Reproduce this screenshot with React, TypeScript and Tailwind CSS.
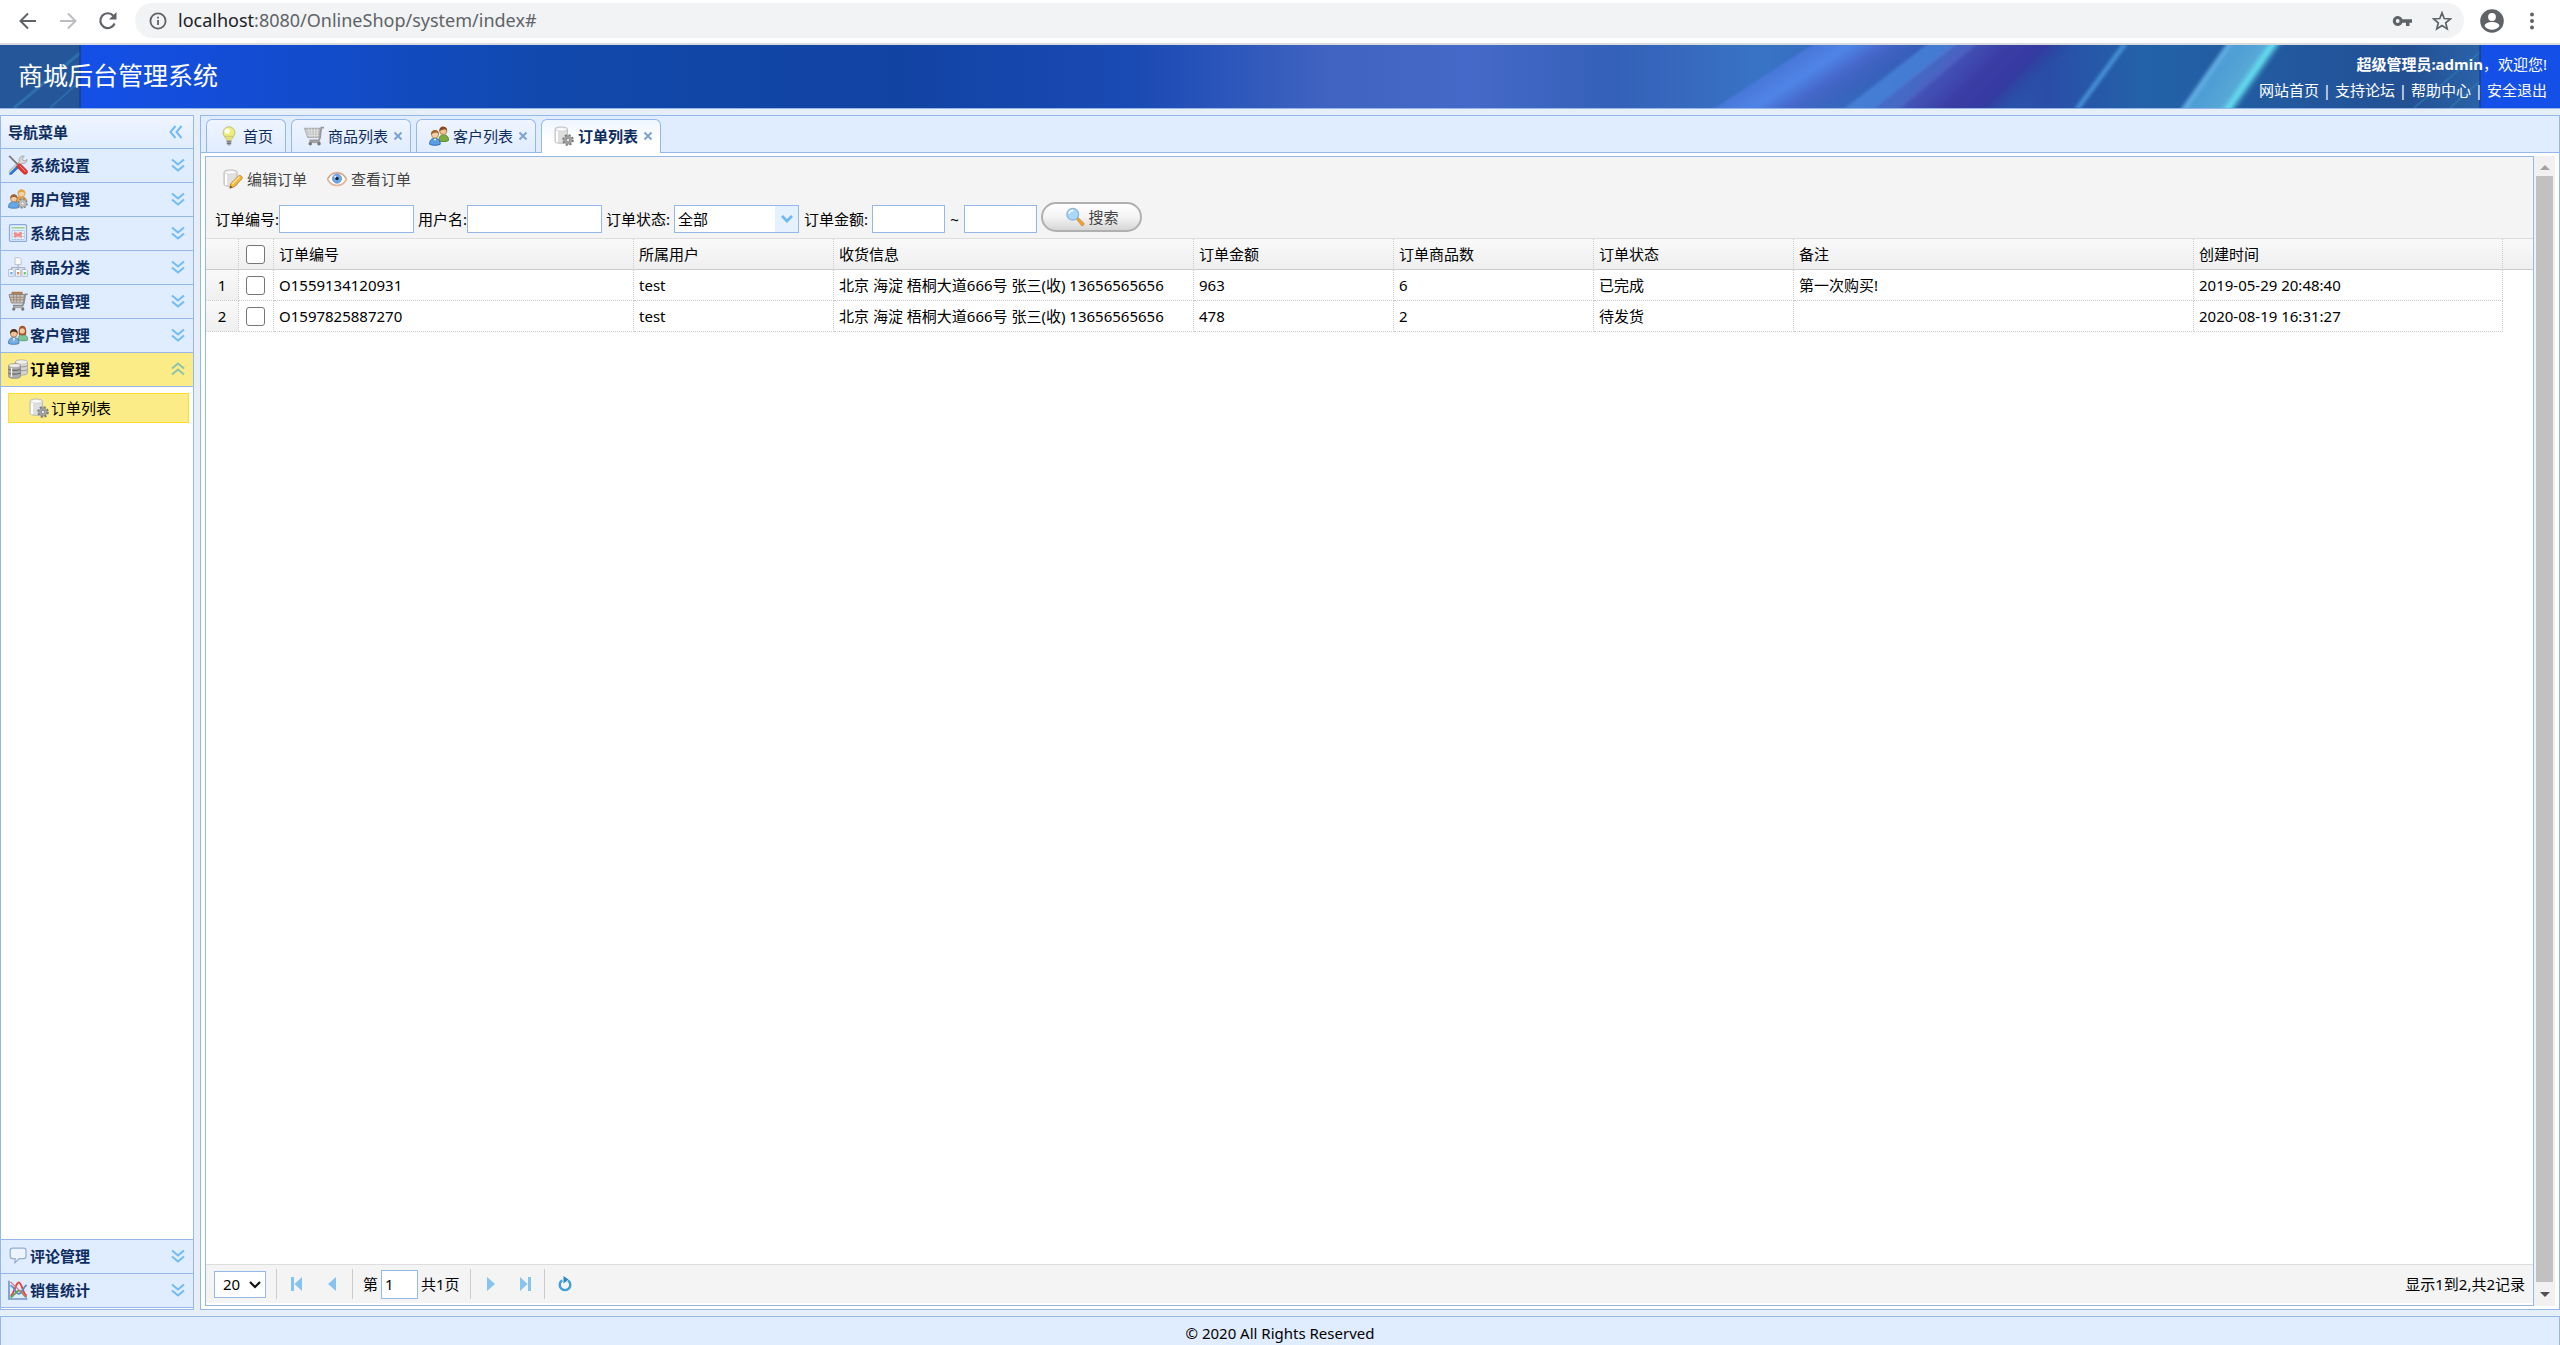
import { useState } from "react";
import type { ReactElement, ReactNode } from "react";

type IconProps = { children: ReactNode };

function Icon({ children }: IconProps): ReactElement {
  return (
    <svg viewBox="0 0 16 16" className="h-5 w-5 shrink-0" fill="none" aria-hidden="true">
      {children}
    </svg>
  );
}

const BulbIcon = () => (
  <Icon>
    <circle cx="8" cy="5.3" r="4.7" fill="#eeef78" stroke="#c2bd78" strokeWidth=".8" />
    <path d="M4.600 8.200 6.200 11.700h3.600l1.600-3.500z" fill="#e4e376" stroke="#bdb778" strokeWidth=".5" />
    <circle cx="6.600" cy="4" r="2.100" fill="#fffff0" />
    <path d="M6.200 11.400h3.600v3l-.9 1.200H7.100l-.9-1.200z" fill="#a9a9a9" />
    <path d="M6.200 12.600h3.600M6.300 14h3.400" stroke="#666" strokeWidth=".6" />
  </Icon>
);

const CartIcon = () => (
  <Icon>
    <path d="M.4 1.800h12.400L12 9.200H2.900z" fill="#bdbdbd" stroke="#a3a3a3" strokeWidth=".7" />
    <path d="M1.100 3.800h11.200M1.700 5.600H12M2.300 7.500h9.600M3.600 2l1 7M6 2l.5 7.200M8.500 2v7.200M10.700 2l-.3 7.200" stroke="#ededed" strokeWidth=".5" />
    <path d="M16 1.300h-2.200l-1 8.200-1 2H4.400" stroke="#989898" strokeWidth="1.400" />
    <path d="M4.300 12.800h8.700" stroke="#a3a3a3" strokeWidth="1.800" />
    <circle cx="5" cy="14.200" r="1.400" fill="#777" />
    <circle cx="12" cy="14.200" r="1.400" fill="#777" />
  </Icon>
);

const GoodsIcon = () => (
  <Icon>
    <path d="M3 .6h8.500l.8 3H2.200z" fill="#b07d52" />
    <path d="M.8 2.800h12.400l-.9 6.800H2.700z" fill="#cfc3b6" stroke="#8f8a86" strokeWidth=".8" />
    <path d="M1.500 5h11M2.200 7h10.500M4.300 3l.5 6.200M7 3v6.200M9.700 3l-.2 6.200" stroke="#8d7f72" strokeWidth=".6" />
    <path d="M15.800 2.600h-1.900L12.600 10l-1 1.600H4" stroke="#8c8c8c" strokeWidth="1.300" />
    <path d="M4 12.900h8.400" stroke="#aaa" strokeWidth="1.700" />
    <circle cx="4.600" cy="14.400" r="1.300" fill="#777" />
    <circle cx="11.800" cy="14.400" r="1.300" fill="#777" />
  </Icon>
);

const CustomersIcon = () => (
  <Icon>
    <path d="M8 11.200c0-3 1.600-4.300 3.600-4.300s4.100 1.300 4.100 4.600c-1 1.100-5 1.300-7.700.6z" fill="#7cab3f" stroke="#4f7f22" strokeWidth=".6" />
    <circle cx="11.400" cy="3.900" r="2.900" fill="#f1c596" stroke="#9a6431" strokeWidth=".5" />
    <path d="M8.400 4.300C8 1.600 9.800.4 11.600.5c2 0 3.200 1.400 2.800 3.900-.4-1.200-1-1.800-2-1.900-1.200.6-3 .2-4 1.800z" fill="#8a4a1c" />
    <path d="M.5 14.600c0-3.400 1.500-4.700 4.200-4.700S9 11.200 9 14.600c-1.400 1.100-7 1.100-8.500 0z" fill="#5b9ee6" stroke="#2264b4" strokeWidth=".7" />
    <circle cx="4.800" cy="6.700" r="2.900" fill="#f6cfa3" stroke="#a56d38" strokeWidth=".5" />
    <path d="M1.700 7.100c-.4-2.700 1.200-4 3.100-4s3.500 1.300 3 4c-.3-1.200-.9-1.800-2-1.900-1.200.5-3 .1-4.100 1.900z" fill="#a4632a" />
    <path d="M3.700 10.200l1.100 1.600 1.200-1.600z" fill="#fff" />
  </Icon>
);

const ClientsIcon = () => (
  <Icon>
    <path d="M8 12c0-3 1.300-4.500 3.600-4.500s4.100 1.200 4.200 4.500c-1.500.8-5.600.9-7.800 0z" fill="#7cc494" stroke="#478d62" strokeWidth=".6" />
    <path d="M8.700 7.800C8.200 3 9 .6 11.500.6s3.600 2.400 3 7c-.8.8-4.800 1-5.800.2z" fill="#a5552c" />
    <circle cx="11.400" cy="4.700" r="2.100" fill="#f4c9a0" />
    <path d="M.4 14.700c0-3.400 1.600-4.600 4.200-4.600s4.200 1.200 4.200 4.600c-1.400 1-7 1-8.400 0z" fill="#79aee4" stroke="#3f77b8" strokeWidth=".7" />
    <circle cx="4.700" cy="6.900" r="2.800" fill="#f0c397" stroke="#8a5c35" strokeWidth=".5" />
    <path d="M1.700 7.200c-.4-2.700 1.100-4 3-4s3.400 1.300 2.900 4C7 5.600 6.500 5.500 4.700 5.300c-1.300 0-2.400.4-3 1.900z" fill="#51361f" />
    <path d="M4 10.300l.7 3 .8-3z" fill="#fff" />
  </Icon>
);

const UserGearIcon = () => (
  <Icon>
    <path d="M6.500 10c0-2.600 1.700-4 4.100-4S15 7.400 15 10z" fill="#e9a54b" stroke="#b9772a" strokeWidth=".5" />
    <circle cx="10.800" cy="3.500" r="2.800" fill="#f7d3a0" stroke="#c48b3c" strokeWidth=".5" />
    <path d="M7.900 3.800C7.600 1.300 9 .3 10.800.3s3.300 1.100 3 3.500c-1-1.700-4.500-1.900-5.900 0z" fill="#e2a638" />
    <path d="M.4 14.800c0-3.300 1.500-4.700 4.200-4.700s4.300 1.400 4.300 4.700c-1.500.8-7 .8-8.500 0z" fill="#6aa5e3" stroke="#3c74b8" strokeWidth=".6" />
    <circle cx="4.700" cy="7.500" r="2.700" fill="#f4cba1" stroke="#99653a" strokeWidth=".5" />
    <path d="M1.800 7.700c-.2-2.400 1.100-3.600 2.900-3.600s3.200 1.200 2.900 3.600C6.500 6 3.200 5.900 1.800 7.700z" fill="#9e6231" />
    <circle cx="11.700" cy="11.500" r="3.500" fill="#c9c9c9" stroke="#858585" strokeWidth="1.300" strokeDasharray="1.600 1.100" />
    <circle cx="11.700" cy="11.500" r="2.900" fill="#c6c6c6" stroke="#909090" strokeWidth=".5" />
    <circle cx="11.700" cy="11.500" r="1.200" fill="#f5f5f5" stroke="#888" strokeWidth=".4" />
  </Icon>
);

const ToolsIcon = () => (
  <Icon>
    <path d="M15.300 3.600a3.200 3.200 0 0 1-4.300 3.100L3.700 14.300a1.500 1.500 0 0 1-2.200-2.100l7.600-7A3.200 3.200 0 0 1 13 .9l-1.500 1.800.4 1.500 1.600.4z" fill="#d8d8d8" stroke="#999" strokeWidth=".6" />
    <path d="M1 14.800 7.200 8.300l1.700 1.600-5.800 5.700c-1 .6-2.700.2-2.100-.8z" fill="#2f76d2" />
    <path d="M.3.900 1.600.4 8.200 7l-1 1z" fill="#777" />
    <path d="M7.900 7.500c1-1 2.100-.4 2.800.3l4.300 4.200c1.800 2.100-.7 4.500-2.800 2.800L8 10.500c-1-1-.9-2.200-.1-3z" fill="#e2362e" stroke="#b9302a" strokeWidth=".5" />
    <path d="M9.400 8.600l4.600 4.700" stroke="#ff9c92" strokeWidth=".8" />
  </Icon>
);

const LogIcon = () => (
  <Icon>
    <rect x="1.200" y="1.300" width="13.600" height="13.400" rx="1" fill="#e8f1fc" stroke="#88abdc" strokeWidth="1" />
    <path d="M2.800 3.900h10.500" stroke="#7cc46c" strokeWidth=".9" />
    <path d="M3.200 6h9.800v7.200H3.200z" fill="#f4f8fd" stroke="#a9c3e6" strokeWidth=".7" />
    <path d="M5.600 6v7M8 6v7M10.500 6v7M3.200 8.400h9.800M3.200 10.800h9.800" stroke="#a9c3e6" strokeWidth=".6" />
    <path d="M4.800 7.400H7V8.500h2V7.200h2v4.400H9v-1.100H7v1.100H4.800z" fill="#f38d86" />
  </Icon>
);

const SitemapIcon = () => (
  <Icon>
    <path d="M8 5.500v3M2.800 10.500v-2h10.400v2M8 8.500v2" stroke="#aab4c2" strokeWidth="1" />
    <path d="M5.600.6h3.600l1.300 1.300v4.200H5.600z" fill="#fafafa" stroke="#b5bcc6" strokeWidth=".7" />
    <path d="M.5 10h3.300l1 1v4.400H.5z" fill="#f8fbff" stroke="#a6b3c3" strokeWidth=".7" />
    <path d="M5.900 10h3.300l1 1v4.400H5.900z" fill="#f8fbff" stroke="#a6b3c3" strokeWidth=".7" />
    <path d="M11.200 10h3.300l1 1v4.400h-4.300z" fill="#f8fbff" stroke="#a6b3c3" strokeWidth=".7" />
    <path d="M1.800 12h1.800v2H1.800z" fill="#66a8ee" />
    <path d="M7.200 12H9v2H7.200z" fill="#f08356" />
    <path d="M12.500 12h1.800v2h-1.800z" fill="#6cc46e" />
  </Icon>
);

const DatabasesIcon = () => (
  <Icon>
    <path d="M6 2.200C6 .3 15.500.3 15.500 2.200v9.300c0 1.800-9.500 1.800-9.500 0z" fill="#d3d3d3" stroke="#9c9c9c" strokeWidth=".6" />
    <ellipse cx="10.750" cy="2.300" rx="4.500" ry="1.300" fill="#f0f0f0" />
    <path d="M6 5.300c1 1.300 8.500 1.300 9.500 0M6 8.400c1 1.300 8.500 1.300 9.500 0" stroke="#8d8d8d" strokeWidth=".7" />
    <path d="M.5 5.200c0-1.900 9.500-1.900 9.500 0v8.900c0 1.800-9.500 1.800-9.500 0z" fill="#adadad" stroke="#858585" strokeWidth=".6" />
    <ellipse cx="5.250" cy="5.200" rx="4.500" ry="1.300" fill="#e9e9e9" />
    <path d="M.6 8c1 1.400 8.300 1.400 9.300 0M.6 11c1 1.400 8.300 1.400 9.300 0" stroke="#666" strokeWidth=".9" />
    <path d="M2.800 7v7.400" stroke="#f3f3f3" strokeWidth="1" />
  </Icon>
);

const OrderListIcon = () => (
  <Icon>
    <path d="M.8 2.500C.8.2 10.800.2 10.800 2.500v9.800c0 2.100-10 2.100-10 0z" fill="#dedede" stroke="#adadad" strokeWidth=".6" />
    <path d="M2.400 4v9" stroke="#fff" strokeWidth="1.700" />
    <ellipse cx="5.800" cy="2.600" rx="4.600" ry="1.400" fill="#fbfbfb" stroke="#c4c4c4" strokeWidth=".4" />
    <circle cx="11.200" cy="11.200" r="3.900" stroke="#7b7b7b" strokeWidth="1.500" strokeDasharray="1.700 1.360" />
    <circle cx="11.200" cy="11.200" r="3.300" fill="#a3a3a3" stroke="#7f7f7f" strokeWidth=".5" />
    <circle cx="11.200" cy="11.200" r="1.300" fill="#efefef" stroke="#777" strokeWidth=".5" />
  </Icon>
);

const EditOrderIcon = () => (
  <Icon>
    <path d="M.8 2.500C.8.2 11.300.2 11.300 2.500v9.800c0 2.100-10.500 2.100-10.500 0z" fill="#e0e0e0" stroke="#a9a9a9" strokeWidth=".6" />
    <path d="M2.400 4v9" stroke="#fff" strokeWidth="1.700" />
    <ellipse cx="6" cy="2.600" rx="4.800" ry="1.400" fill="#fbfbfb" stroke="#c4c4c4" strokeWidth=".4" />
    <path d="m5.400 15.400 1-3.900 6.300-6.200c1-.9 3.400 1.200 2.600 2.400l-6.200 6.500z" fill="#f3b83f" stroke="#b97b1e" strokeWidth=".6" />
    <path d="m7.200 12.200 6-6" stroke="#fde79c" strokeWidth="1" />
    <path d="m5.400 15.400.6-2.300 1.700 1.700z" fill="#7a4a1c" />
  </Icon>
);

const EyeIcon = () => (
  <Icon>
    <path d="M.4 8.300C2 4.600 4.700 2.800 8 2.800s6 1.800 7.600 5.500c-1.900 3.300-4.400 4.900-7.600 4.900S2.300 11.600.4 8.300z" fill="#fff" stroke="#e3b294" strokeWidth="1.300" />
    <path d="M.8 7.600C2.600 4.700 5 3.300 8 3.300s5.400 1.400 7.200 4.300" stroke="#b5988a" strokeWidth=".6" />
    <circle cx="8" cy="7.700" r="3.600" fill="#74a9e8" stroke="#4d82c6" strokeWidth=".6" />
    <circle cx="8" cy="7.500" r="1.400" fill="#17233c" />
    <circle cx="6.700" cy="6.200" r=".8" fill="#e5f2ff" />
  </Icon>
);

const SearchIcon = () => (
  <Icon>
    <path d="m9 9.500 1.300-1.300 4.800 4.700c.6 1.200-.8 2.500-1.900 1.900z" fill="#f0a23a" stroke="#c47a22" strokeWidth=".5" />
    <circle cx="6.200" cy="5.800" r="4.700" fill="#a9d6fb" stroke="#8fb4dc" strokeWidth="1" />
    <path d="M3.200 5.300c.4-1.700 1.700-2.500 3.500-2.400" stroke="#fff" strokeWidth="1.200" />
  </Icon>
);

const CommentIcon = () => (
  <Icon>
    <path d="M3.600 1.700h9c1.100 0 1.800.7 1.800 1.800v4.600c0 1.200-.7 1.900-1.800 1.900H9L5.600 13.400 5.700 10H3.600c-1.100 0-1.800-.7-1.800-1.900V3.500c0-1.100.7-1.800 1.800-1.800z" fill="#eef4fd" stroke="#93aed2" strokeWidth="1" />
  </Icon>
);

const ChartIcon = () => (
  <Icon>
    <path d="M.8.600v14.600h14.700" stroke="#6d93cc" strokeWidth="1.300" />
    <path d="M2 12.500C5 12 6 2 8.600 2S12 12 15 12.600" stroke="#e4443c" strokeWidth="1.500" />
    <path d="M2 4.500c3 .5 4 6.500 6.600 6.500S12 5.500 15 4" stroke="#5d86cf" strokeWidth="1.400" />
    <path d="M2 14c3-1 4.500-5.500 6.800-5.500S12 13 15 14" stroke="#58a956" strokeWidth="1.400" />
    <path d="m2 1.500 12.500 12" stroke="#d87474" strokeWidth="1" />
  </Icon>
);

function DoubleChevron({ dir }: { dir: "down" | "up" | "left" }): ReactElement {
  const paths = {
    down: "M1 1.500 7 6.500l6-5M1 7.500l6 5 6-5",
    up: "M1 6.500 7 1.500l6 5M1 12.500l6-5 6 5",
    left: "M6.500 1 1.500 7l5 6M12.500 1l-5 6 5 6",
  };
  return (
    <svg viewBox="0 0 14 14" className="h-[14px] w-[14px] shrink-0" fill="none" aria-hidden="true">
      <path d={paths[dir]} stroke={dir === "up" ? "#8cc3ac" : "#73bbf6"} strokeWidth="2" />
    </svg>
  );
}

function Banner(): ReactElement {
  return (
    <svg
      viewBox="0 0 2560 63"
      preserveAspectRatio="xMidYMid slice"
      className="absolute inset-0 h-full w-full"
      aria-hidden="true"
    >
      <defs>
        <linearGradient id="sky" gradientUnits="userSpaceOnUse" x1="80" y1="0" x2="2480" y2="0">
          <stop offset="0" stopColor="#1450e8" />
          <stop offset=".06" stopColor="#134dd6" />
          <stop offset=".21" stopColor="#1148a9" />
          <stop offset=".34" stopColor="#1143a3" />
          <stop offset=".44" stopColor="#1a4ab4" />
          <stop offset=".52" stopColor="#4063c1" />
          <stop offset=".58" stopColor="#4569c8" />
          <stop offset=".64" stopColor="#3460b8" />
          <stop offset=".7" stopColor="#3874c6" />
          <stop offset=".76" stopColor="#3461b8" />
          <stop offset=".82" stopColor="#2a4ea8" />
          <stop offset=".86" stopColor="#2362a8" />
          <stop offset=".94" stopColor="#22559b" />
          <stop offset=".97" stopColor="#235093" />
          <stop offset="1" stopColor="#2a62a8" />
        </linearGradient>
        <linearGradient id="beam">
          <stop offset="0" stopColor="#4a78dc" stopOpacity=".9" />
          <stop offset=".3" stopColor="#4f85e6" />
          <stop offset=".55" stopColor="#4668cc" />
          <stop offset="1" stopColor="#3a56b4" stopOpacity="0" />
        </linearGradient>
        <linearGradient id="violet">
          <stop offset="0" stopColor="#4a52b8" stopOpacity=".7" />
          <stop offset=".4" stopColor="#3a3ca4" />
          <stop offset=".7" stopColor="#333ba0" />
          <stop offset="1" stopColor="#2450a0" stopOpacity="0" />
        </linearGradient>
        <linearGradient id="cyan">
          <stop offset="0" stopColor="#6cb8ec" />
          <stop offset=".15" stopColor="#4e9cd4" />
          <stop offset=".7" stopColor="#56a8d6" />
          <stop offset=".85" stopColor="#68e8f4" />
          <stop offset="1" stopColor="#3c86bc" stopOpacity=".2" />
        </linearGradient>
        <filter id="soft" x="-10%" y="-10%" width="120%" height="120%">
          <feGaussianBlur stdDeviation="2 0" />
        </filter>
      </defs>
      <rect width="2560" height="63" fill="url(#sky)" />
      <rect width="80" height="63" fill="#25569a" />
      <path d="M14 63 80 8" stroke="#3180b8" strokeWidth="3" opacity=".6" />
      <path d="M50 63 80 36" stroke="#3180b8" strokeWidth="2" opacity=".5" />
      <g filter="url(#soft)">
        <rect x="1812" width="130" height="63" fill="url(#beam)" transform="skewX(-57)" />
        <rect x="1962" width="120" height="63" fill="url(#violet)" transform="skewX(-45)" />
        <rect x="1926" width="30" height="63" fill="#4a86dc" opacity=".75" transform="skewX(-52)" />
        <rect x="1950" width="26" height="63" fill="#5670d0" opacity=".5" transform="skewX(-50)" />
        <rect x="2226" width="56" height="63" fill="url(#cyan)" transform="skewX(-35)" />
        <path d="m2078 63 46-63" stroke="#4a9ade" strokeWidth="4" />
      </g>
      <path d="m2414 63 66-56M2450 63l30-27" stroke="#3180b8" strokeWidth="2" opacity=".5" />
      <rect x="2480" width="80" height="63" fill="#1450e8" />
      <path d="M80 0v63M2480 0v63" stroke="#173566" strokeWidth="1" />
    </svg>
  );
}

function BrowserBar(): ReactElement {
  return (
    <div className="flex h-[45px] shrink-0 items-center border-b-2 border-[#dadbde] bg-white pb-[2px] text-[#5f6368]">
      <div className="flex items-center gap-5 pl-[18px]">
        <button type="button" aria-label="后退">
          <svg viewBox="0 0 20 20" className="h-5 w-5" fill="none" stroke="#5f6368" strokeWidth="2">
            <path d="M18 10H3M10 2.500 2.500 10l7.500 7.500" />
          </svg>
        </button>
        <button type="button" aria-label="前进">
          <svg viewBox="0 0 20 20" className="h-5 w-5" fill="none" stroke="#bcbec1" strokeWidth="2">
            <path d="M2 10h15M10 2.500l7.500 7.500-7.500 7.500" />
          </svg>
        </button>
        <button type="button" aria-label="刷新">
          <svg viewBox="0 0 20 20" className="h-5 w-5" fill="none" stroke="#5f6368" strokeWidth="2.200">
            <path d="M16.600 12.500A7.400 7.400 0 1 1 15.500 5" />
            <path d="M18.500 1v7.500H11z" fill="#5f6368" stroke="none" />
          </svg>
        </button>
      </div>
      <div className="ml-[17px] flex h-[35px] flex-1 items-center rounded-full bg-[#f1f3f4] pr-3 pl-[13px]">
        <svg viewBox="0 0 20 20" className="h-5 w-5" fill="none" stroke="#5f6368" strokeWidth="1.800" aria-hidden="true">
          <circle cx="10" cy="10" r="7.600" />
          <path d="M10 9v5M10 5.800v1.800" />
        </svg>
        <p className="ml-[10px] flex-1 pb-px text-[18px] leading-6">
          <span className="text-[#202124]">localhost</span>:8080/OnlineShop/system/index#
        </p>
        <button type="button" aria-label="密码" className="mr-5">
          <svg viewBox="0 0 20 20" className="h-5 w-5" fill="#5f6368">
            <path d="M10.400 8.200A5 5 0 1 0 10.400 11.800H14V15h3.500v-3.200H20V8.200zM5.700 11.900a1.900 1.900 0 1 1 0-3.800 1.900 1.900 0 0 1 0 3.800z" />
          </svg>
        </button>
        <button type="button" aria-label="收藏">
          <svg viewBox="0 0 20 20" className="h-5 w-5" fill="none" stroke="#5f6368" strokeWidth="1.700">
            <path d="m10 1.800 2.200 5.700 6.300.4-4.800 3.900 1.500 6.100-5.200-3.300-5.200 3.300 1.500-6.100L1.500 7.900l6.300-.4z" />
          </svg>
        </button>
      </div>
      <button type="button" aria-label="个人资料" className="ml-4">
        <svg viewBox="0 0 24 24" className="h-6 w-6">
          <circle cx="12" cy="12" r="11.800" fill="#5f6368" />
          <circle cx="12" cy="8" r="3.900" fill="#fff" />
          <path d="M4.600 17c0-3 4.400-4.100 7.400-4.100s7.400 1.100 7.400 4.100c-1.700 2.500-4.300 3.800-7.400 3.800S6.300 19.500 4.600 17z" fill="#fff" />
        </svg>
      </button>
      <button type="button" aria-label="菜单" className="mr-[18px] ml-[18px]">
        <svg viewBox="0 0 20 20" className="h-5 w-5" fill="#5f6368">
          <circle cx="10" cy="3.500" r="2" />
          <circle cx="10" cy="10" r="2" />
          <circle cx="10" cy="16.500" r="2" />
        </svg>
      </button>
    </div>
  );
}

const headerLinks = ["网站首页", "支持论坛", "帮助中心", "安全退出"];

function Header(): ReactElement {
  return (
    <header className="relative flex h-16 shrink-0 items-center justify-between border-b border-[#95b8e7] text-white">
      <Banner />
      <h1 className="relative pb-1 pl-[18px] text-[25px] leading-8">商城后台管理系统</h1>
      <div className="relative pr-[13px] text-right">
        <p className="leading-[26px]">
          <strong>超级管理员:admin</strong>，欢迎您!
        </p>
        <nav className="flex leading-[26px]">
          {headerLinks.map((link, i) => (
            <span key={link} className="flex">
              {i > 0 && <span className="w-4 text-center">|</span>}
              <a href="#">{link}</a>
            </span>
          ))}
        </nav>
      </div>
    </header>
  );
}

const menusTop = [
  { title: "系统设置", icon: <ToolsIcon /> },
  { title: "用户管理", icon: <UserGearIcon /> },
  { title: "系统日志", icon: <LogIcon /> },
  { title: "商品分类", icon: <SitemapIcon /> },
  { title: "商品管理", icon: <GoodsIcon /> },
  { title: "客户管理", icon: <ClientsIcon /> },
];

const menusBottom = [
  { title: "评论管理", icon: <CommentIcon /> },
  { title: "销售统计", icon: <ChartIcon /> },
];

function MenuRow({ title, icon }: { title: string; icon: ReactNode }): ReactElement {
  return (
    <button
      type="button"
      className="flex h-[34px] w-full shrink-0 items-center border-b border-[#95b8e7] bg-[#e0ecff] pr-2 pb-px pl-[7px] font-bold text-[#0e2d5f]"
    >
      {icon}
      <span className="ml-[2px] flex-1 text-left">{title}</span>
      <DoubleChevron dir="down" />
    </button>
  );
}

function Sidebar(): ReactElement {
  return (
    <aside className="flex w-[194px] shrink-0 flex-col border border-[#95b8e7] bg-white pb-px">
      <div className="flex h-[33px] shrink-0 items-center justify-between border-b border-[#95b8e7] bg-gradient-to-b from-[#eff5ff] to-[#e0ecff] pr-[10px] pl-[7px] font-bold text-[#0e2d5f]">
        导航菜单
        <button type="button" aria-label="收起">
          <DoubleChevron dir="left" />
        </button>
      </div>
      {menusTop.map((menu) => (
        <MenuRow key={menu.title} {...menu} />
      ))}
      <button
        type="button"
        className="flex h-[34px] w-full shrink-0 items-center border-b border-[#95b8e7] bg-[#fbec88] pr-2 pb-px pl-[7px] font-bold text-black"
      >
        <DatabasesIcon />
        <span className="ml-[2px] flex-1 text-left">订单管理</span>
        <DoubleChevron dir="up" />
      </button>
      <div className="flex-1 border-b border-[#95b8e7] pt-[6px] pr-1 pl-[7px]">
        <a
          href="#"
          className="flex h-[30px] items-center border border-[#fbdf2a] bg-[#fbec88] pb-px pl-5 text-black"
        >
          <OrderListIcon />
          <span className="ml-[2px]">订单列表</span>
        </a>
      </div>
      {menusBottom.map((menu) => (
        <MenuRow key={menu.title} {...menu} />
      ))}
    </aside>
  );
}

const tabs = [
  { title: "首页", icon: <BulbIcon />, closable: false },
  { title: "商品列表", icon: <CartIcon />, closable: true },
  { title: "客户列表", icon: <CustomersIcon />, closable: true },
  { title: "订单列表", icon: <OrderListIcon />, closable: true },
];

function Tabs(): ReactElement {
  const [active, setActive] = useState("订单列表");

  return (
    <div className="flex h-[37px] shrink-0 gap-[5px] border-b border-[#95b8e7] bg-[#e0ecff] pt-[3px] pl-[5px] text-[#0e2d5f]">
      {tabs.map(({ title, icon, closable }) => (
        <div
          key={title}
          className={
            active === title
              ? "-mb-px flex items-center rounded-t-md border border-b-0 border-[#95b8e7] bg-gradient-to-b from-[#eff5ff] to-white to-60% pb-[2px] font-bold"
              : "flex items-center rounded-t-md border border-b-0 border-[#95b8e7] bg-gradient-to-b from-[#eff5ff] to-[#e0ecff] pb-px"
          }
        >
          <button
            type="button"
            className={closable ? "flex items-center gap-1 pl-3" : "flex items-center gap-1 px-3"}
            onClick={() => setActive(title)}
          >
            {icon}
            {title}
          </button>
          {closable && (
            <button type="button" aria-label={`关闭${title}`} className="mr-[7px] ml-[5px]">
              <svg viewBox="0 0 10 10" className="h-[10px] w-[10px]" stroke="#7b9fd0" strokeWidth="1.800">
                <path d="m1.500 1.500 7 7M8.500 1.500l-7 7" />
              </svg>
            </button>
          )}
        </div>
      ))}
    </div>
  );
}

function Toolbar(): ReactElement {
  return (
    <div className="shrink-0 border-b border-[#dddddd] bg-[#f4f4f4] pt-[7px] pb-[5px]">
      <div className="flex h-[30px] items-center gap-5 pl-[17px] text-[#444]">
        <button type="button" className="flex items-center gap-1">
          <EditOrderIcon />
          编辑订单
        </button>
        <button type="button" className="flex items-center gap-1">
          <EyeIcon />
          查看订单
        </button>
      </div>
      <form className="mt-[11px] flex h-7 items-center pl-[9px]" onSubmit={(e) => e.preventDefault()}>
        <label htmlFor="orderSn">订单编号:</label>
        <input id="orderSn" type="text" className="mr-1 h-7 w-[135px] border border-[#95b8e7] bg-white px-1" />
        <label htmlFor="username">用户名:</label>
        <input id="username" type="text" className="mr-1 h-7 w-[135px] border border-[#95b8e7] bg-white px-1" />
        <label htmlFor="status" className="mr-1">订单状态:</label>
        <div className="relative mr-[5px]">
          <select id="status" className="block h-7 w-[125px] appearance-none border border-[#95b8e7] bg-white pl-[3px]">
            <option>全部</option>
            <option>待发货</option>
            <option>已完成</option>
          </select>
          <span className="pointer-events-none absolute top-px right-px flex h-[26px] w-[23px] items-center justify-center bg-[#e6f1ff]">
            <svg viewBox="0 0 12 8" className="h-2 w-3" fill="none" stroke="#6fb8f2" strokeWidth="2.800" aria-hidden="true">
              <path d="m1 1 5 5 5-5" />
            </svg>
          </span>
        </div>
        <label htmlFor="priceMin" className="mr-1">订单金额:</label>
        <input id="priceMin" type="text" className="h-7 w-[73px] border border-[#95b8e7] bg-white px-1" />
        <span className="w-[19px] text-center">~</span>
        <input type="text" aria-label="最高金额" className="mr-1 h-7 w-[73px] border border-[#95b8e7] bg-white px-1" />
        <button
          type="submit"
          className="-mt-1 flex h-[30px] w-[101px] items-center justify-center gap-1 rounded-full border-2 border-[#b0b0b0] bg-gradient-to-b from-white via-[#f4f4f4] to-[#d6d6d6] text-[#444]"
        >
          <SearchIcon />
          搜索
        </button>
      </form>
    </div>
  );
}

const headings = ["订单编号", "所属用户", "收货信息", "订单金额", "订单商品数", "订单状态", "备注", "创建时间"];

const orders = [
  ["O1559134120931", "test", "北京 海淀 梧桐大道666号 张三(收) 13656565656", "963", "6", "已完成", "第一次购买!", "2019-05-29 20:48:40"],
  ["O1597825887270", "test", "北京 海淀 梧桐大道666号 张三(收) 13656565656", "478", "2", "待发货", "", "2020-08-19 16:31:27"],
];

function OrderTable(): ReactElement {
  return (
    <table className="w-full table-fixed border-separate border-spacing-0 text-left">
      <colgroup>
        <col className="w-[33px]" />
        <col className="w-[35px]" />
        <col className="w-[360px]" />
        <col className="w-[200px]" />
        <col className="w-[360px]" />
        <col className="w-[200px]" />
        <col className="w-[200px]" />
        <col className="w-[200px]" />
        <col className="w-[400px]" />
        <col className="w-[309px]" />
        <col />
      </colgroup>
      <thead>
        <tr className="h-[31px] bg-gradient-to-b from-[#f9f9f9] to-[#efefef]">
          <td className="border-r border-b border-dotted border-[#ccc] [border-bottom-style:solid]" />
          <th className="border-r border-b border-dotted border-[#ccc] p-0 [border-bottom-style:solid]">
            <input type="checkbox" aria-label="全选" className="ml-[7px] block h-[19px] w-[19px] appearance-none rounded-[3px] border border-[#767676] bg-white" />
          </th>
          {headings.map((heading) => (
            <th key={heading} className="border-r border-b border-dotted border-[#ccc] py-0 pl-[5px] font-normal [border-bottom-style:solid]">
              {heading}
            </th>
          ))}
          <td className="border-b border-[#ccc]" />
        </tr>
      </thead>
      <tbody>
        {orders.map((order, i) => (
          <tr key={order[0]} className="h-[31px]">
            <td className="border-r border-b border-dotted border-[#ccc] bg-gradient-to-b from-[#f9f9f9] to-[#efefef] p-0 text-center">
              {i + 1}
            </td>
            <td className="border-r border-b border-dotted border-[#ccc] p-0">
              <input type="checkbox" aria-label={`选择 ${order[0]}`} className="ml-[7px] block h-[19px] w-[19px] appearance-none rounded-[3px] border border-[#767676] bg-white" />
            </td>
            {order.map((cell, j) => (
              <td key={j} className="truncate border-r border-b border-dotted border-[#ccc] py-0 pl-[5px]">
                {cell}
              </td>
            ))}
            <td />
          </tr>
        ))}
      </tbody>
    </table>
  );
}

function PagerSeparator(): ReactElement {
  return <span className="h-[30px] w-px bg-[#ccc]" />;
}

function Pager(): ReactElement {
  return (
    <div className="flex h-[39px] shrink-0 items-center border-t border-[#dddddd] bg-[#f4f4f4] pr-2 pl-2">
      <div className="relative mr-[10px]">
        <select aria-label="每页条数" className="block h-[27px] w-[52px] appearance-none border border-[#95b8e7] bg-white pl-2">
          <option>20</option>
          <option>50</option>
        </select>
        <svg viewBox="0 0 12 8" className="pointer-events-none absolute top-[10px] right-[5px] h-2 w-3" fill="none" stroke="#111" strokeWidth="2.200" aria-hidden="true">
          <path d="m1 1 5 5 5-5" />
        </svg>
      </div>
      <PagerSeparator />
      <button type="button" aria-label="第一页" className="ml-[14px]">
        <svg viewBox="0 0 12 14" className="h-[14px] w-3" fill="#86c3ef">
          <path d="M0 0h3v14H0zM11 0v14L3.500 7z" />
        </svg>
      </button>
      <button type="button" aria-label="上一页" className="mr-[13px] ml-6">
        <svg viewBox="0 0 12 14" className="h-[14px] w-3" fill="#86c3ef">
          <path d="M9 0v14L1 7z" />
        </svg>
      </button>
      <PagerSeparator />
      <label htmlFor="page" className="mr-[3px] ml-[10px]">第</label>
      <input id="page" type="text" defaultValue="1" className="h-[29px] w-[37px] border border-[#95b8e7] bg-white px-[3px]" />
      <span className="mr-[10px] ml-[3px]">共1页</span>
      <PagerSeparator />
      <button type="button" aria-label="下一页" className="ml-[14px]">
        <svg viewBox="0 0 12 14" className="h-[14px] w-3" fill="#86c3ef">
          <path d="M2 0v14l8-7z" />
        </svg>
      </button>
      <button type="button" aria-label="最后一页" className="mr-[13px] ml-[22px]">
        <svg viewBox="0 0 12 14" className="h-[14px] w-3" fill="#86c3ef">
          <path d="M9 0h3v14H9zM1 0v14l7.500-7z" />
        </svg>
      </button>
      <PagerSeparator />
      <button type="button" aria-label="重新加载" className="ml-[13px]">
        <svg viewBox="0 0 14 16" className="h-4 w-[14px]" fill="none">
          <path d="M4.200 4.300A5.300 5.300 0 1 0 10 4.400" stroke="#3f9fdd" strokeWidth="2.400" />
          <path d="M5.500 0 10.500 3.500 5.500 7.500z" fill="#2a86cc" />
        </svg>
      </button>
      <span className="ml-auto">显示1到2,共2记录</span>
    </div>
  );
}

function Scrollbar(): ReactElement {
  return (
    <div className="flex w-[21px] shrink-0 flex-col items-center bg-[#f1f1f1]">
      <svg viewBox="0 0 20 20" className="h-5 w-5" fill="#a3a3a3" aria-hidden="true">
        <path d="M5 14h10l-5-5z" />
      </svg>
      <div className="w-[17px] flex-1 bg-[#c1c1c1]" />
      <svg viewBox="0 0 20 24" className="h-6 w-5" fill="#505050" aria-hidden="true">
        <path d="M5 10h10l-5 5z" />
      </svg>
    </div>
  );
}

export default function App(): ReactElement {
  return (
    <div className="flex h-screen flex-col overflow-hidden bg-[#e6eef8] font-['Noto_Sans','Noto_Sans_CJK_SC',sans-serif] text-[15px] leading-5 text-black">
      <BrowserBar />
      <Header />
      <div className="flex min-h-0 flex-1 gap-[6px] pt-[6px] pb-[6px]">
        <Sidebar />
        <main className="flex min-w-0 flex-1 flex-col border border-[#95b8e7] bg-white">
          <Tabs />
          <div className="flex min-h-0 flex-1 pt-[3px] pr-1 pb-[3px] pl-1">
            <section className="flex min-w-0 flex-1 flex-col border border-[#95b8e7] bg-white pb-[2px]">
              <Toolbar />
              <div className="min-h-0 flex-1 overflow-hidden">
                <OrderTable />
              </div>
              <Pager />
            </section>
            <Scrollbar />
          </div>
        </main>
      </div>
      <footer className="h-[29px] shrink-0 border border-b-0 border-[#95b8e7] bg-[#e0ecff] pt-[6px] text-center">
        © 2020 All Rights Reserved
      </footer>
    </div>
  );
}
